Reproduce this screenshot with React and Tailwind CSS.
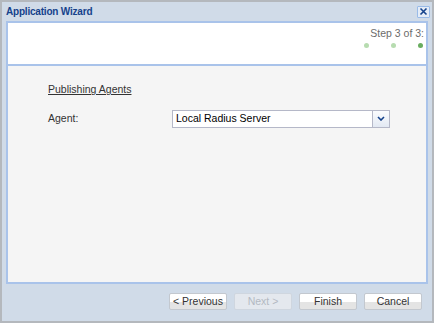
export default function App() {
  return (
    <div className="w-[434px] h-[323px] bg-[#d0dbe8] border-2 border-[#b4b8bd] flex flex-col font-['Liberation_Sans',Arial,sans-serif] text-[10.5px]">
      {/* title bar */}
      <div className="h-[19px] flex items-center justify-between pl-[4px] pr-[2px]">
        <span className="font-bold text-[#15428b] text-[10px] tracking-[-0.2px]">Application Wizard</span>
        <button className="w-[13px] h-[12px] border border-[#99bbe8] bg-[#e4ecf7] rounded-[1px] flex items-center justify-center">
          <svg width="9" height="9" viewBox="0 0 9 9">
            <path d="M1.5 1.5 L7.5 7.5 M7.5 1.5 L1.5 7.5" stroke="#15428b" strokeWidth="1.6" />
          </svg>
        </button>
      </div>

      {/* content panel */}
      <div className="mx-[4px] h-[263px] border-2 border-[#a9c3ea] flex flex-col">
        <div className="h-[43px] bg-white border-b-2 border-[#a9c3ea] flex flex-col items-end pr-[2px] pt-[3px]">
          <span className="text-[#6b6b6b]">Step 3 of 3:</span>
          <div className="flex gap-[22px] mt-[1px] pr-[1px]">
            <span className="w-[5px] h-[5px] rounded-full bg-[#b7dcb0]" />
            <span className="w-[5px] h-[5px] rounded-full bg-[#b7dcb0]" />
            <span className="w-[5px] h-[5px] rounded-full bg-[#69ad5f]" />
          </div>
        </div>
        <div className="flex-1 bg-[#f5f5f5] pl-[40px] pt-[16px] text-[#333]">
          <div className="underline">Publishing Agents</div>
          <div className="flex items-center mt-[12px]">
            <span className="w-[124px]">Agent:</span>
            <div className="flex h-[18px]">
              <div className="w-[201px] bg-white border border-[#b5b8c8] flex items-center pl-[3px] text-black">
                Local Radius Server
              </div>
              <div className="w-[17px] border border-l-0 border-[#b5b8c8] bg-[linear-gradient(#fbfcfe,#e3e9f3)] flex items-center justify-center">
                <svg width="8" height="5" viewBox="0 0 8 5">
                  <path d="M1 1 L4 4 L7 1" stroke="#15428b" strokeWidth="1.6" fill="none" />
                </svg>
              </div>
            </div>
          </div>
        </div>
      </div>

      {/* buttons */}
      <div className="flex justify-end gap-[7px] pr-[10px] pt-[9px]">
        {[
          ["< Previous", false],
          ["Next >", true],
          ["Finish", false],
          ["Cancel", false],
        ].map(([label, disabled]) => (
          <button
            key={label}
            className={`w-[58px] h-[17px] rounded-[2px] border flex items-center justify-center ${
              disabled
                ? "border-[#cfd6df] bg-[#e4e8ee] text-[#b3b9c2]"
                : "border-[#c3c8cf] bg-[linear-gradient(#ffffff_55%,#e4e4e4_55%)] text-[#333]"
            }`}
          >
            {label}
          </button>
        ))}
      </div>
    </div>
  );
}
